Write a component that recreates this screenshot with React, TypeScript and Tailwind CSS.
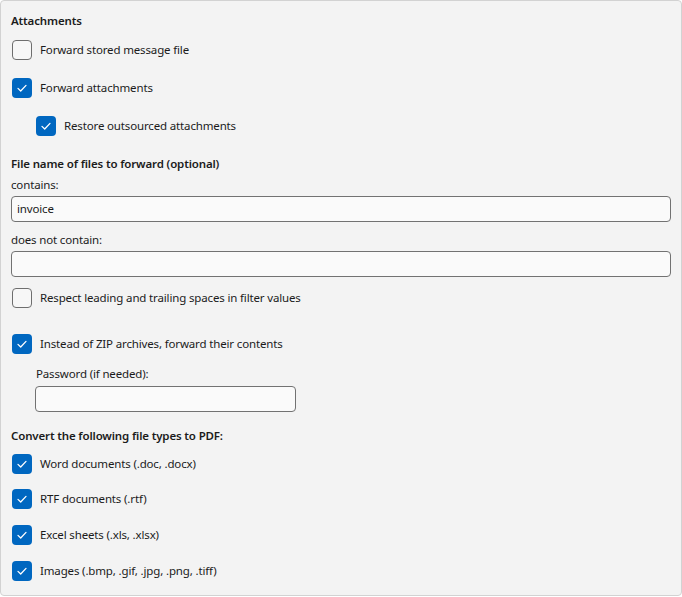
import React from "react";

function Check({ checked, label, indent }: { checked: boolean; label: string; indent?: boolean }) {
    return (
        <div className={`flex h-5 items-center ${indent ? "pl-[35px]" : "pl-[11px]"}`}>
            {checked ? (
                <span className="flex h-5 w-5 items-center justify-center rounded-[4px] bg-[#0067c0]">
                    <svg width="12" height="12" viewBox="0 0 12 12" fill="none">
                        <path d="M2 6.4 4.7 9 10 3.4" stroke="white" strokeWidth="1.3" strokeLinecap="round" strokeLinejoin="round" />
                    </svg>
                </span>
            ) : (
                <span className="h-5 w-5 rounded-[4px] border border-[#6e6e6e] bg-[#f7f7f7]" />
            )}
            <span className="ml-2">{label}</span>
        </div>
    );
}

function Field({ value, className }: { value?: string; className: string }) {
    return (
        <div className={`flex h-[26px] items-center rounded-[4px] border border-[#727272] bg-[#fafafa] px-[5px] ${className}`}>
            {value}
        </div>
    );
}

export default function App() {
    return (
        <div
            className="h-[596px] w-[682px] rounded-[4px] border border-[#d2d2d2] bg-[#f3f3f3] text-[11.5px] leading-4 tracking-[-0.15px] text-[#1b1b1b]"
            style={{ fontFamily: '"Noto Sans", sans-serif' }}
        >
            <div className="flex flex-col pt-3">
                <div className="h-4 pl-[10px] font-semibold">Attachments</div>
                <div className="mt-[11px]"><Check checked={false} label="Forward stored message file" /></div>
                <div className="mt-[18px]"><Check checked label="Forward attachments" /></div>
                <div className="mt-[18px]"><Check checked indent label="Restore outsourced attachments" /></div>

                <div className="mt-5 h-4 pl-[10px] font-semibold">File name of files to forward (optional)</div>
                <div className="mt-[5px] h-4 pl-[10px]">contains:</div>
                <Field value="invoice" className="mx-[10px] mt-[3px]" />
                <div className="mt-[10px] h-4 pl-[10px]">does not contain:</div>
                <Field className="mx-[10px] mt-[3px]" />
                <div className="mt-[11px]"><Check checked={false} label="Respect leading and trailing spaces in filter values" /></div>

                <div className="mt-[26px]"><Check checked label="Instead of ZIP archives, forward their contents" /></div>
                <div className="mt-3 h-4 pl-[35px]">Password (if needed):</div>
                <Field className="ml-[34px] mt-1 w-[261px]" />

                <div className="mt-4 h-4 pl-[10px] font-semibold">Convert the following file types to PDF:</div>
                <div className="mt-[10px]"><Check checked label="Word documents (.doc, .docx)" /></div>
                <div className="mt-[15px]"><Check checked label="RTF documents (.rtf)" /></div>
                <div className="mt-4"><Check checked label="Excel sheets (.xls, .xlsx)" /></div>
                <div className="mt-4"><Check checked label="Images (.bmp, .gif, .jpg, .png, .tiff)" /></div>
            </div>
        </div>
    );
}
